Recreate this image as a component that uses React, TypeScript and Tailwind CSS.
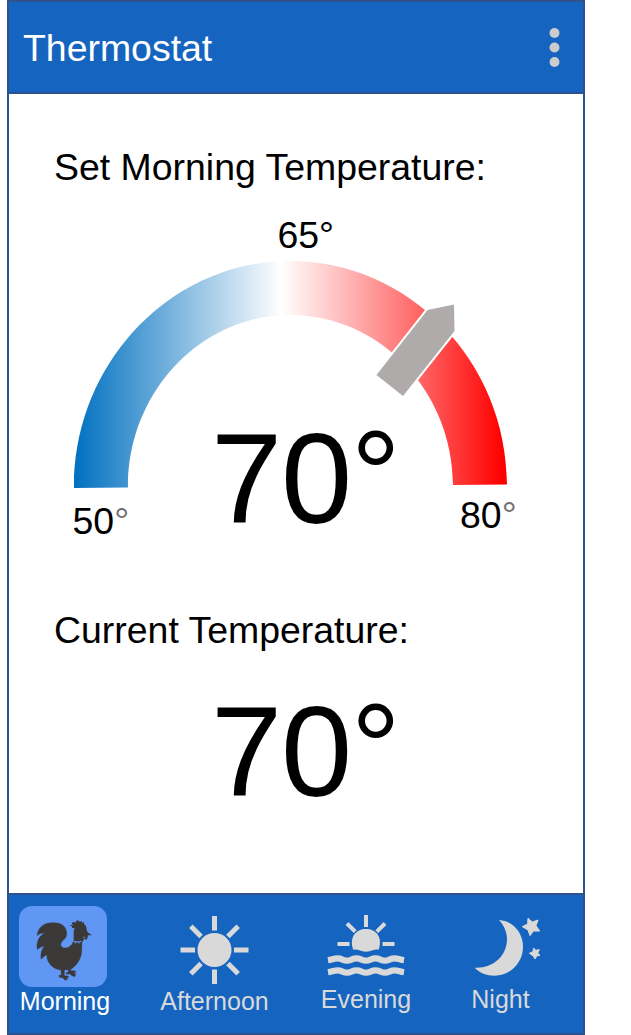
import React from "react";

function Rooster() {
  return (
    <svg className="h-[76px] w-[66px] shrink-0" viewBox="0 0 198 228" fill="#3b3838">
      <path d="M21 77C24 50 45 37 68 38C96 37 112 51 110 74C109 87 94 92 92 102C92 109 98 115 105 114C118 114 123 104 128 102L127 98L132 95L137 101L142 96L147 102L150 97L156 96L155 119C156 143 142 166 122 178L122 182L134 182L139 187L130 188L137 192L135 200L126 197L119 191L109 193L109 188L115 186L115 179L103 180L103 197L115 198L114 205L108 204L112 209L105 211L98 203L88 202L87 196L94 195L93 180C69 178 50 158 50 134L43 139C37 143 35 147 33 148C31 130 35 117 44 109C34 109 26 115 22 119C18 99 25 78 44 70C34 68 26 72 21 77Z" strokeLinejoin="round" stroke="#3b3838" />
      <path d="M119 47C121 43 126 46 130 46L126 42L127 37L132 36L136 39L138 33L145 31L149 35L155 33L156 38L162 37L163 44C168 45 170 52 170 60L173 67L186 76L174 76L173 83L169 89L163 87L164 80L160 80L162 89L157 96L151 92L146 95L142 92L138 95L135 92L131 94L131 63L134 54L126 54L126 49Z" strokeLinejoin="round" />
    </svg>
  );
}

function Sun() {
  return (
    <svg className="h-[70px] w-[70px]" viewBox="-34.500 -35 70 70" fill="#d9d9d9">
      <circle r="17" />
      {[0, 45, 90, 135, 180, 225, 270, 315].map((a) => (
        <rect key={a} x="-2.5" y={a % 90 ? -33.5 : -34} width="5" height="14.5" transform={`rotate(${a})`} />
      ))}
    </svg>
  );
}

function Sunset() {
  return (
    <svg className="mb-[7px] h-[64px] w-[78px]" viewBox="0 0 78 64" fill="#d9d9d9">
      <path d="M26.2 36.7C22 24 29 16 39 16S56 24 51.8 36.7C48 35.8 45 37.5 42.5 38.3Q39 39.2 35.5 38.3C33 37.3 30 35.8 26.2 36.7Z" />
      <g stroke="#d9d9d9" strokeWidth="4">
        <path d="M39 2V14M20 10.5L28.2 18.7M58 10.5L49.8 18.7M10.5 31H22.5M55.5 31H67.5" />
      </g>
      <g fill="none" stroke="#d9d9d9" strokeWidth="6.2">
        <path d="M1 47.3C5 46.7 7 45.4 10.5 45.4C15 45.4 16 47.7 20 47.7S25 45.4 29.5 45.4S35 47.7 39 47.7S44 45.4 48.5 45.4S54 47.7 58 47.7S63 45.4 67.5 45.4C71 45.4 73 46.700 77 47.3" />
        <path d="M1 59.300C5 58.700 7 57.400 10.5 57.400C15 57.400 16 59.700 20 59.700S25 57.400 29.5 57.400S35 59.700 39 59.700S44 57.400 48.5 57.400S54 59.700 58 59.700S63 57.400 67.5 57.400C71 57.400 73 58.700 77 59.300" />
      </g>
    </svg>
  );
}

function Moon() {
  return (
    <svg className="mb-[4px] ml-[14px] h-[70px] w-[76px] shrink-0" viewBox="0 0 228 210" fill="#d9d9d9">
      <path d="M87 30C128 33 159 67 159 110C159 158 121 197 74 197C49 197 28 188 14 173C69 176 111 138 111 87C111 66 101 45 87 30Z" />
      <g strokeLinejoin="round" stroke="#d9d9d9" strokeWidth="3">
        <path d="M174 25L187 36L204 30L198 47L209 63L190 63L180 77L174 60L157 50L173 42Z" />
        <path d="M191 114L197 121L208 119L203 129L210 136L200 138L195 147L190 138L178 130L189 125Z" />
      </g>
    </svg>
  );
}

function BigTemp({ value }: { value: number }) {
  return (
    <span className="text-[128px] leading-[148px] tracking-[-1.200px]">
      {value}
      <span className="inline-block -translate-y-[6px] text-[124px] leading-none">°</span>
    </span>
  );
}

function Gauge() {
  return (
    <div className="relative h-[356px]">
      <svg className="block h-[356px] w-[574px]" viewBox="9 200 574 356">
        <defs>
          <linearGradient id="heat" gradientUnits="userSpaceOnUse" x1="74" y1="0" x2="507" y2="0">
            <stop offset="0" stopColor="#0070c0" />
            <stop offset="0.48" stopColor="#ffffff" />
            <stop offset="0.8" stopColor="#ff6464" />
            <stop offset="0.99" stopColor="#ff0000" />
          </linearGradient>
        </defs>
        <path d="M74 488C73.5 363 171 261 290 261C409 261 506.500 361 507 484.500L453 485C452.500 391 380 315 290 315C200 315 127.500 393 128 487.500Z" fill="url(#heat)" />
        <path d="M376.500 375L427.500 310L454 304.500L454.500 331L403 396Z" fill="#afabab" stroke="#fff" strokeWidth="4" paintOrder="stroke" />
      </svg>
      <span className="absolute left-[268.500px] top-[14px]">65°</span>
      <span className="absolute left-[63.500px] top-[299.500px]">50<span className="text-[#767171]">°</span></span>
      <span className="absolute left-[451px] top-[293.500px]">80<span className="text-[#767171]">°</span></span>
      <div className="absolute left-[202px] top-[205px] h-[148px] leading-[148px]">
        <BigTemp value={70} />
      </div>
    </div>
  );
}

function Tab({ icon, label, className, active }: { icon: React.ReactNode; label: React.ReactNode; className: string; active?: boolean }) {
  return (
    <button className={`flex flex-col items-center text-[25px] leading-[30px] ${active ? "text-white" : "text-[#d9d9d9]"} ${className}`}>
      {icon}
      <span>{label}</span>
    </button>
  );
}

export default function App() {
  return (
    <div className="min-h-[1035px] bg-white pl-[7px] font-['Liberation_Sans',Arial,sans-serif] text-[37.440px] leading-[42px] text-black">
      <div className="flex h-[1035px] w-[578px] flex-col border-2 border-[#2f528f]">
        <header className="flex h-[92px] items-center justify-between border-b-2 border-[#2f528f] bg-[#1565c0] pl-[14px] pr-[23px] pt-[1px] text-white">
          <h1>Thermostat</h1>
          <svg className="h-[44px] w-[12px]" viewBox="0 0 12 44" fill="#cccccc">
            <circle cx="6.500" cy="7" r="5" />
            <circle cx="6.500" cy="21.500" r="5" />
            <circle cx="6.500" cy="36" r="5" />
          </svg>
        </header>
        <main className="flex-1">
          <h2 className="h-[106px] pl-[45px] pt-[52px]">Set Morning Temperature:</h2>
          <Gauge />
          <h2 className="pl-[45px] pt-[53px]">Current Temperature:</h2>
          <div className="ml-[202px] mt-[27px] h-[148px] leading-[148px]">
            <BigTemp value={70} />
          </div>
        </main>
        <nav className="flex h-[140px] items-start border-t-2 border-[#2f528f] bg-[#1565c0]">
          <Tab
            active
            className="w-[112px] pt-[11px]"
            label="Morning"
            icon={<span className="mb-[-1px] mr-[4px] flex h-[81px] w-[88px] justify-center rounded-[13px] bg-[#6096f4] pt-[4px]"><Rooster /></span>}
          />
          <Tab className="w-[187px] pt-[20px]" label="Afternoon" icon={<span className="mb-[1px]"><Sun /></span>} />
          <Tab className="w-[116px] pt-[18px]" label="Evening" icon={<Sunset />} />
          <Tab className="w-[153px] pt-[15px]" label="Night" icon={<Moon />} />
        </nav>
      </div>
    </div>
  );
}
